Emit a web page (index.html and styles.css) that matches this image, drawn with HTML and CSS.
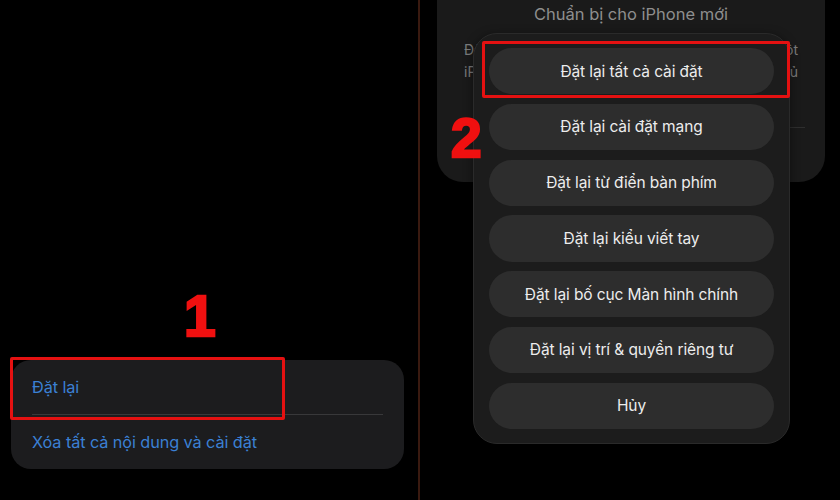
FILE: index.html
```html
<!DOCTYPE html>
<html lang="vi">
<head>
<meta charset="utf-8">
<link rel="stylesheet" href="styles.css">
</head>
<body>
<div class="page">
  <section class="left">
    <div class="step step-one">1</div>
    <div class="group">
      <div class="row">
        <span class="link">Đặt lại</span>
        <div class="mark mark-one"></div>
      </div>
      <div class="sep"></div>
      <div class="row">
        <span class="link">Xóa tất cả nội dung và cài đặt</span>
      </div>
    </div>
  </section>
  <div class="divider"></div>
  <section class="right">
    <div class="bgcard">
      <div class="bgtitle">Chuẩn bị cho iPhone mới</div>
      <div class="bgline">Đảm bảo mọi thứ sẵn sàng để chuyển sang một</div>
      <div class="bgline">iPhone mới, kể cả khi bạn không có đủ</div>
      <div class="bgsep"></div>
    </div>
    <div class="sheet">
      <button class="opt">Đặt lại tất cả cài đặt</button>
      <button class="opt">Đặt lại cài đặt mạng</button>
      <button class="opt">Đặt lại từ điển bàn phím</button>
      <button class="opt">Đặt lại kiểu viết tay</button>
      <button class="opt">Đặt lại bố cục Màn hình chính</button>
      <button class="opt">Đặt lại vị trí &amp; quyền riêng tư</button>
      <button class="opt">Hủy</button>
    </div>
    <div class="mark mark-two"></div>
    <div class="step step-two">2</div>
  </section>
</div>
</body>
</html>
```
FILE: styles.css
```css
* { box-sizing: border-box; }
html, body {
  margin: 0;
  padding: 0;
  background: #000;
  width: 840px;
  height: 500px;
  overflow: hidden;
}
body {
  font-family: Inter, "Liberation Sans", "Noto Sans", sans-serif;
  -webkit-font-smoothing: antialiased;
}
.page {
  display: flex;
  width: 840px;
  height: 500px;
}
.left {
  width: 418px;
  height: 500px;
  display: flex;
  flex-direction: column;
  align-items: flex-start;
  justify-content: flex-end;
  padding: 0 14px 31px 11px;
}
.divider {
  width: 2px;
  height: 500px;
  background: #3a1a10;
}
.step {
  color: #f01010;
  font-family: "Liberation Sans", Arial, sans-serif;
  font-weight: 700;
  line-height: 1;
  -webkit-text-stroke: 2.5px #f01010;
}
.step-one {
  font-size: 57px;
  margin: 0 0 15px 173px;
}
.group {
  width: 393px;
  height: 109px;
  background: #1c1c1e;
  border-radius: 20px;
  display: flex;
  flex-direction: column;
}
.row {
  height: 54px;
  display: flex;
  align-items: center;
  padding-left: 21px;
  position: relative;
}
.sep {
  height: 1px;
  background: #38383a;
  margin: 0 21px;
}
.link {
  color: #3b80d4;
  font-size: 16.3px;
  letter-spacing: -0.1px;
}
.mark {
  position: absolute;
  border: 3.5px solid #e41111;
  border-radius: 2px;
}
.mark-one {
  left: -1px;
  top: -3px;
  width: 275px;
  height: 63px;
}
.right {
  flex: 1;
  height: 500px;
  position: relative;
  padding: 0 0 0 17px;
}
.bgcard {
  width: 388px;
  height: 182px;
  background: #1a1a1a;
  border-radius: 0 0 26px 26px;
  display: flex;
  flex-direction: column;
  align-items: center;
  padding-top: 3px;
  position: relative;
}
.bgtitle {
  color: #8e8e8e;
  font-size: 16.5px;
  line-height: 22px;
}
.bgline {
  width: 334px;
  color: #7a7a7a;
  font-size: 14px;
  line-height: 22px;
  text-align: justify;
  text-align-last: justify;
}
.bgline:nth-of-type(2) { margin-top: 14px; }
.bgsep {
  position: absolute;
  left: 40px;
  right: 20px;
  top: 127px;
  height: 1px;
  background: #2e2e2e;
}
.step-two {
  position: absolute;
  left: 31px;
  top: 111px;
  font-size: 55px;
}
.sheet {
  position: absolute;
  left: 53px;
  top: 33px;
  width: 317px;
  height: 411px;
  background: #1c1c1c;
  border: 1px solid #2a2a2a;
  border-radius: 24px;
  padding: 14px 15px;
  display: flex;
  flex-direction: column;
  gap: 9.3px;
  box-shadow: 0 2px 10px rgba(0,0,0,0.5);
}
.opt {
  height: 46.5px;
  border: none;
  border-radius: 24px;
  background: #2d2d2d;
  color: #ececec;
  font-family: Inter, "Liberation Sans", "Noto Sans", sans-serif;
  font-size: 15.5px;
  letter-spacing: -0.1px;
  padding: 0;
}
.mark-two {
  left: 62px;
  top: 41px;
  width: 308px;
  height: 57px;
}
```
